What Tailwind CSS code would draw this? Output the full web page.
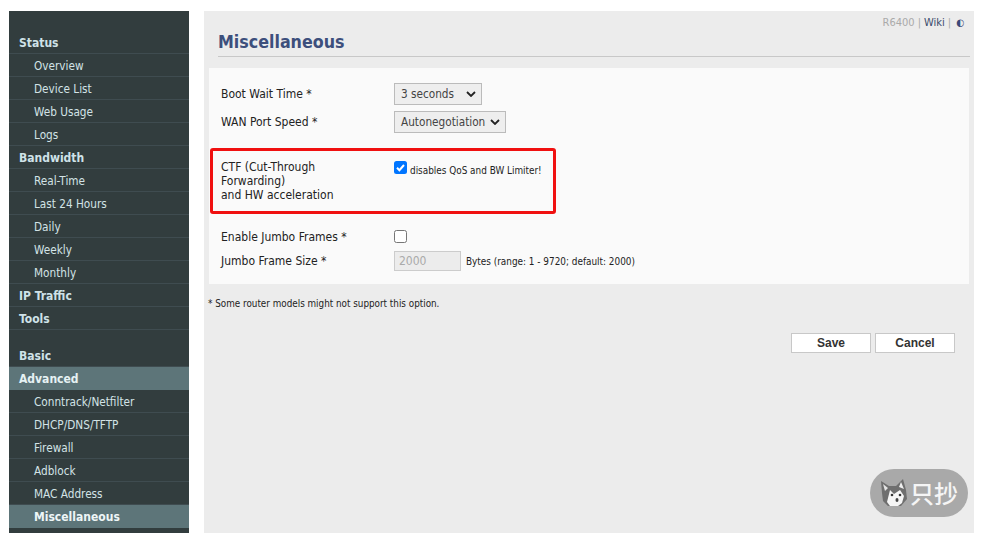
<!DOCTYPE html>
<html>
<head>
<meta charset="utf-8">
<script src="https://cdn.jsdelivr.net/npm/@tailwindcss/browser@4"></script>
</head>
<body class="bg-white h-[533px] w-[983px] overflow-hidden relative font-['DejaVu_Sans_Condensed','Open_Sans','Noto_Sans_CJK_SC',sans-serif] text-[12px] text-[#222]">
<div class="flex h-[533px] pt-[11px] pl-[9px] pr-[9px] gap-[15px]">
  <nav class="w-[180px] shrink-0 bg-[#323d3e] pt-[20px] text-[#d3e3e6] text-[11.7px] leading-[25px]">
    <div class="h-[23px] pl-[10px] text-[12px] font-bold border-b border-[#3f4c50] text-[#cfe2e8]">Status</div>
    <div class="h-[23px] pl-[25px] border-b border-[#3f4c50]">Overview</div>
    <div class="h-[23px] pl-[25px] border-b border-[#3f4c50]">Device List</div>
    <div class="h-[23px] pl-[25px] border-b border-[#3f4c50]">Web Usage</div>
    <div class="h-[23px] pl-[25px] border-b border-[#3f4c50]">Logs</div>
    <div class="h-[23px] pl-[10px] text-[12px] font-bold border-b border-[#3f4c50] text-[#cfe2e8]">Bandwidth</div>
    <div class="h-[23px] pl-[25px] border-b border-[#3f4c50]">Real-Time</div>
    <div class="h-[23px] pl-[25px] border-b border-[#3f4c50]">Last 24 Hours</div>
    <div class="h-[23px] pl-[25px] border-b border-[#3f4c50]">Daily</div>
    <div class="h-[23px] pl-[25px] border-b border-[#3f4c50]">Weekly</div>
    <div class="h-[23px] pl-[25px] border-b border-[#3f4c50]">Monthly</div>
    <div class="h-[23px] pl-[10px] text-[12px] font-bold border-b border-[#3f4c50] text-[#cfe2e8]">IP Traffic</div>
    <div class="h-[23px] pl-[10px] text-[12px] font-bold border-b border-[#3f4c50] text-[#cfe2e8] mb-[14px]">Tools</div>
    <div class="h-[23px] pl-[10px] text-[12px] font-bold border-b border-[#3f4c50] text-[#cfe2e8]">Basic</div>
    <div class="h-[23px] pl-[10px] text-[12px] font-bold bg-[#5d7579] text-[#e6f2f4]">Advanced</div>
    <div class="h-[23px] pl-[25px] border-b border-[#3f4c50]">Conntrack/Netfilter</div>
    <div class="h-[23px] pl-[25px] border-b border-[#3f4c50]">DHCP/DNS/TFTP</div>
    <div class="h-[23px] pl-[25px] border-b border-[#3f4c50]">Firewall</div>
    <div class="h-[23px] pl-[25px] border-b border-[#3f4c50]">Adblock</div>
    <div class="h-[23px] pl-[25px] border-b border-[#3f4c50]">MAC Address</div>
    <div class="h-[23px] pl-[25px] text-[12px] font-bold bg-[#5d7579] text-[#eef6f7]">Miscellaneous</div>
  </nav>
  <main class="w-[770px] bg-[#ececec] flex flex-col pl-[5px] pr-[5px]">
    <div class="flex justify-end items-center gap-[3px] h-[11px] mt-[6px] pr-[5px] text-[11px] leading-[11px] text-[#aaa]">
      <span>R6400</span><span>|</span><span class="text-[#3b4a6b]">Wiki</span><span>|</span><span class="text-[#3b4a7a] text-[10px] ml-[2px]">◐</span>
    </div>
    <h1 class="ml-[9px] mr-[-1px] mt-[5px] h-[23px] text-[17.7px] leading-[19px] font-bold text-[#3d4f7c] border-b border-[#c8c8c8] box-content">Miscellaneous</h1>
    <section class="mt-[11px] h-[216px] bg-[#fafafa] pl-[12px] pt-[14px]">
      <div class="flex items-center h-[24px] mb-[4px]"><span class="w-[173px]">Boot Wait Time *</span>
        <div class="w-[88px] h-[22px] border border-[#bbb] bg-[#eee] pl-[6px] flex items-center justify-between pr-[5px] text-[11.7px] text-[#444]"><span class="pt-[2px]">3 seconds</span><svg width="10" height="6" viewBox="0 0 10 6"><path d="M1 1l4 4 4-4" fill="none" stroke="#222" stroke-width="1.8"/></svg></div></div>
      <div class="flex items-center h-[24px]"><span class="w-[173px]">WAN Port Speed *</span>
        <div class="w-[112px] h-[22px] border border-[#bbb] bg-[#eee] pl-[6px] flex items-center justify-between pr-[5px] text-[11.7px] text-[#444]"><span class="pt-[2px]">Autonegotiation</span><svg width="10" height="6" viewBox="0 0 10 6"><path d="M1 1l4 4 4-4" fill="none" stroke="#222" stroke-width="1.8"/></svg></div></div>
      <div class="flex mt-[26px] h-[44px] leading-[14px]"><div class="w-[173px]">CTF (Cut-Through<br>Forwarding)<br>and HW acceleration</div>
        <div class="flex items-start pt-[1px]"><span class="w-[13px] h-[13px] rounded-[2.5px] bg-[#0075ff] flex items-center justify-center"><svg width="11" height="11" viewBox="0 0 11 11"><path d="M2 5.8l2.4 2.4 4.6-5.2" fill="none" stroke="#fff" stroke-width="2"/></svg></span><span class="ml-[3px] mt-[4px] text-[9.9px] leading-[12px]">disables QoS and BW Limiter!</span></div></div>
      <div class="flex items-center h-[24px] mt-[21px]"><span class="w-[173px]">Enable Jumbo Frames *</span>
        <span class="w-[13px] h-[13px] rounded-[2.5px] border border-[#767676] bg-white -mt-[1px]"></span></div>
      <div class="flex items-center h-[24px]"><span class="w-[173px]">Jumbo Frame Size *</span>
        <div class="w-[67px] h-[20px] border border-[#ccc] bg-[#ececec] text-[#aaa] pl-[4px] leading-[18px]">2000</div><span class="ml-[5px] mt-[2px] text-[9.9px]">Bytes (range: 1 - 9720; default: 2000)</span></div>
    </section>
    <p class="mt-[13px] -ml-[1px] text-[9.8px] leading-[14px]">* Some router models might not support this option.</p>
    <div class="flex justify-end gap-[4px] mt-[22px] mr-[14px]">
      <button class="w-[80px] h-[20px] bg-white border border-[#c8c8c8] text-[12px] font-['Liberation_Sans',sans-serif] font-bold text-[#333]">Save</button>
      <button class="w-[80px] h-[20px] bg-white border border-[#c8c8c8] text-[12px] font-['Liberation_Sans',sans-serif] font-bold text-[#333]">Cancel</button>
    </div>
  </main>
</div>
<div class="absolute left-[210px] top-[148px] w-[346px] h-[66px] border-[3px] border-[#f01010] rounded-[3px]"></div>
<div class="absolute left-[870px] top-[469px] w-[98px] h-[48px] rounded-full bg-[#a9a9a9] flex items-center pl-[9px]">
  <svg width="32" height="32" viewBox="0 0 32 32"><path d="M2 4l8 5h7l7-7 3 11 1 9-6 7H9l-5-5-1-8z" fill="#6f6f6f"/><path d="M22 5l3 7-5-2z" fill="#f0f0f0"/><path d="M4 7l5 4-3 3z" fill="#e4e4e4"/><path d="M11 13l4 4 6-4 4 6-2 7-4 3h-8l-3-4z" fill="#f6f6f6"/><circle cx="13" cy="18" r="1.3" fill="#333"/><circle cx="21" cy="18" r="1.3" fill="#333"/><ellipse cx="18" cy="23" rx="1.5" ry="2" fill="#444"/></svg>
  <span class="-ml-[1px] text-[#f5f5f5] text-[24px] leading-[48px] font-medium font-['Noto_Sans_CJK_SC',sans-serif]">只抄</span>
</div>
</body>
</html>
